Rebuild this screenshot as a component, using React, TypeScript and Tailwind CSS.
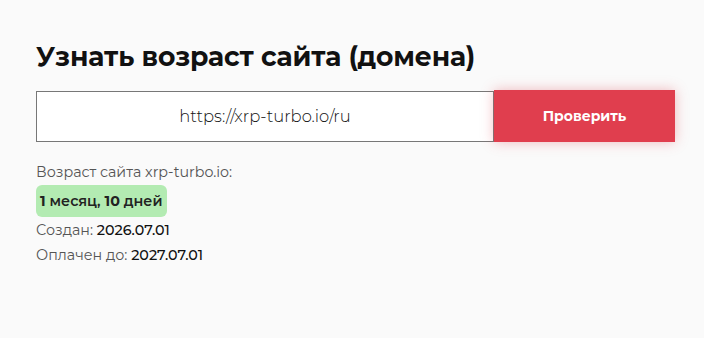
import React from "react";

export default function App() {
  return (
    <div
      className="w-[704px] h-[338px] bg-[#fafafa] pl-[36px] pt-[40px]"
      style={{ fontFamily: "Montserrat, 'Open Sans', 'Noto Sans', sans-serif" }}
    >
      <h1 className="text-[26.6px] leading-[34px] font-bold text-[#111] tracking-[-0.15px]">
        Узнать возраст сайта (домена)
      </h1>
      <div className="flex mt-[16px] w-[639px]">
        <div className="w-[458px] h-[51px] mt-[1px] border border-[#777] bg-white flex items-center justify-center text-[16.4px] font-light text-[#111]">
          https://xrp-turbo.io/ru
        </div>
        <button className="w-[181px] h-[52px] bg-[#e03e4e] text-white text-[14px] font-bold shadow-[0_0_12px_rgba(224,62,78,0.35)]">
          Проверить
        </button>
      </div>
      <div className="mt-[19px] text-[14.3px] text-[#555] leading-[22px]">
        Возраст сайта xrp-turbo.io:
      </div>
      <div className="mt-[2px] inline-block bg-[#b3ebb2] rounded-[6px] px-[4px] h-[32px] leading-[32px] text-[14.3px] text-[#222] font-semibold">
        <span className="font-bold">1</span> месяц, <span className="font-bold">10</span> дней
      </div>
      <div className="mt-[1px] text-[14.3px] text-[#555] leading-[25px]">
        Создан: <span className="text-[#111] font-medium">2026.07.01</span>
      </div>
      <div className="text-[14.3px] text-[#555] leading-[25px]">
        Оплачен до: <span className="text-[#111] font-medium">2027.07.01</span>
      </div>
    </div>
  );
}
